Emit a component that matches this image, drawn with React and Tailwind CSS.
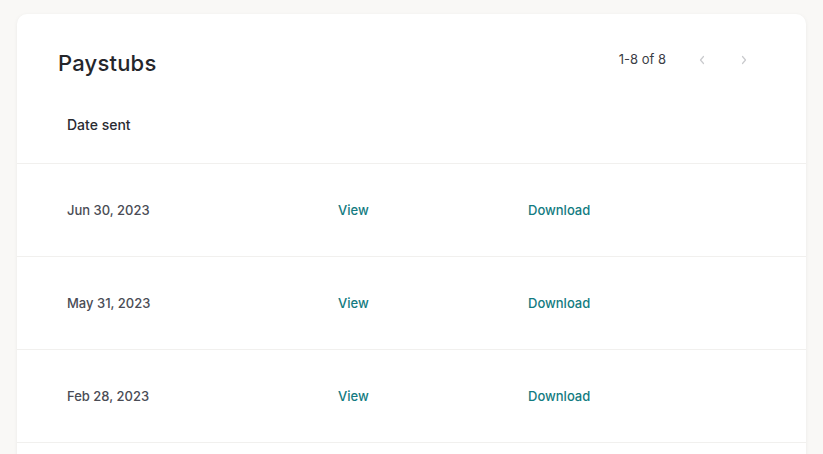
import React from "react";

const rows = [
  { date: "Jun 30, 2023" },
  { date: "May 31, 2023" },
  { date: "Feb 28, 2023" },
];

const Chevron = ({ dir }) => (
  <svg width="8" height="10" viewBox="0 0 8 10" fill="none">
    <path
      d={dir === "left" ? "M5.5 1.5L2.5 5l3 3.5" : "M2.5 1.5L5.5 5l-3 3.5"}
      stroke="#c9cacd"
      strokeWidth="1.2"
      strokeLinecap="round"
      strokeLinejoin="round"
    />
  </svg>
);

export default function App() {
  return (
    <div
      className="h-[454px] overflow-hidden bg-[#f9f8f6] pt-[14px] pl-[17px]"
      style={{ fontFamily: "Inter, 'Noto Sans', sans-serif" }}
    >
      <div className="w-[789px] h-[460px] rounded-[10px] bg-white shadow-[0_1px_4px_rgba(0,0,0,0.06)]">
        {/* header */}
        <div className="flex items-center justify-between pt-[35px] pl-[41px] pr-[57px]">
          <h2 className="text-[22px] leading-[28px] font-medium text-[#25262b] tracking-[0.2px]">
            Paystubs
          </h2>
          <div className="flex items-center -mt-[7px]">
            <span className="text-[13px] text-[#3b3d45] mr-[31px]">1-8 of 8</span>
            <div className="w-[10px] flex justify-center">
              <Chevron dir="left" />
            </div>
            <div className="w-[10px] flex justify-center ml-[32px]">
              <Chevron dir="right" />
            </div>
          </div>
        </div>

        <div className="pl-[50px] mt-[35px] pb-[27px]">
          <span className="text-[14px] leading-[20px] font-medium text-[#2a2b31]">
            Date sent
          </span>
        </div>

        {rows.map((r) => (
          <div
            key={r.date}
            className="flex items-center h-[93px] pt-[2px] border-t border-[#f1f0ee] pl-[50px] text-[13px]"
          >
            <span className="w-[271px] text-[#4a4c55] font-medium">{r.date}</span>
            <span className="w-[190px] text-[#137b81] font-medium">View</span>
            <span className="text-[#137b81] font-medium">Download</span>
          </div>
        ))}
        <div className="border-t border-[#f1f0ee]" />
      </div>
    </div>
  );
}
